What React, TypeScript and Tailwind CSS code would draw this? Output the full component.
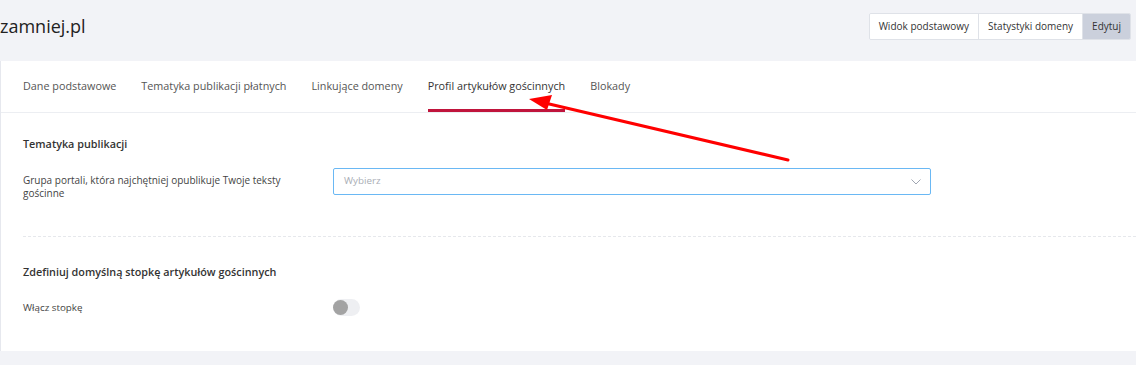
const tabs = [
  'Dane podstawowe',
  'Tematyka publikacji płatnych',
  'Linkujące domeny',
  'Profil artykułów gościnnych',
  'Blokady',
];

const font = { fontFamily: '"Open Sans", "Liberation Sans", sans-serif' };

export default function App() {
  return (
    <div className="relative h-[365px] w-[1136px] overflow-hidden bg-[#f2f3f7] text-[#333]" style={font}>
      <div className="flex h-[61px] items-start justify-between pt-[13px]">
        <h1 className="text-[18px] leading-[26px] text-[#222]">zamniej.pl</h1>
        <div className="mr-[5px] flex h-[27px] overflow-hidden rounded-[2px] border border-[#dfe2e8] text-[10px] text-[#333]">
          <button className="bg-white px-[9px]">Widok podstawowy</button>
          <button className="border-l border-[#dfe2e8] bg-white px-[9px]">Statystyki domeny</button>
          <button className="border-l border-[#dfe2e8] bg-[#cbd0dc] px-[9px]">Edytuj</button>
        </div>
      </div>

      <div className="h-[290px] border-l border-[#e6e8ee] bg-white">
        <div className="flex h-[52px] gap-[25px] border-b border-[#eceef2] px-[22px] text-[10.8px] text-[#555]">
          {tabs.map((t, i) => (
            <div
              key={t}
              className={
                'flex items-center pt-[2px] ' +
                (i === 3 ? 'border-b-[3px] border-[#c0143c] text-[#333]' : 'border-b-[3px] border-transparent')
              }
            >
              {t}
            </div>
          ))}
        </div>

        <div className="px-[22px]">
          <div className="pt-[22px] text-[10.8px] font-semibold leading-[18px] text-[#333]">Tematyka publikacji</div>
          <div className="mt-[15px] flex items-start">
            <div className="w-[310px] pr-[24px] pt-[6px] text-[10px] leading-[13px] text-[#444]">
              Grupa portali, która najchętniej opublikuje Twoje teksty gościnne
            </div>
            <div className="flex h-[27px] w-[598px] items-center justify-between rounded-[2px] border border-[#6ab8f4] pl-[10px] pr-[8px]">
              <span className="text-[9.8px] text-[#a9adb5]">Wybierz</span>
              <svg width="12" height="8" viewBox="0 0 12 8" fill="none">
                <path d="M1.5 1.5 L6 6 L10.5 1.5" stroke="#a0a6b2" strokeWidth="1" />
              </svg>
            </div>
          </div>

          <div className="-mr-[22px] mt-[36px] border-t border-dashed border-[#e6e8ec]" />

          <div className="pt-[26px] text-[10.8px] font-semibold leading-[18px] text-[#333]">
            Zdefiniuj domyślną stopkę artykułów gościnnych
          </div>
          <div className="mt-[19px] flex items-center">
            <div className="w-[310px] text-[9.8px] text-[#444]">Włącz stopkę</div>
            <div className="-mt-[1px] flex h-[17px] w-[27px] items-center rounded-full bg-[#eeeff2]">
              <div className="h-[15px] w-[15px] rounded-full bg-[#a3a3a3]" />
            </div>
          </div>
        </div>
      </div>

      <svg className="pointer-events-none absolute left-0 top-0" width="1136" height="365">
        <line x1="788" y1="160" x2="545" y2="103" stroke="#f00" strokeWidth="3" strokeLinecap="round" />
        <polygon points="529,99 552,95 547,110" fill="#f00" />
      </svg>
    </div>
  );
}
